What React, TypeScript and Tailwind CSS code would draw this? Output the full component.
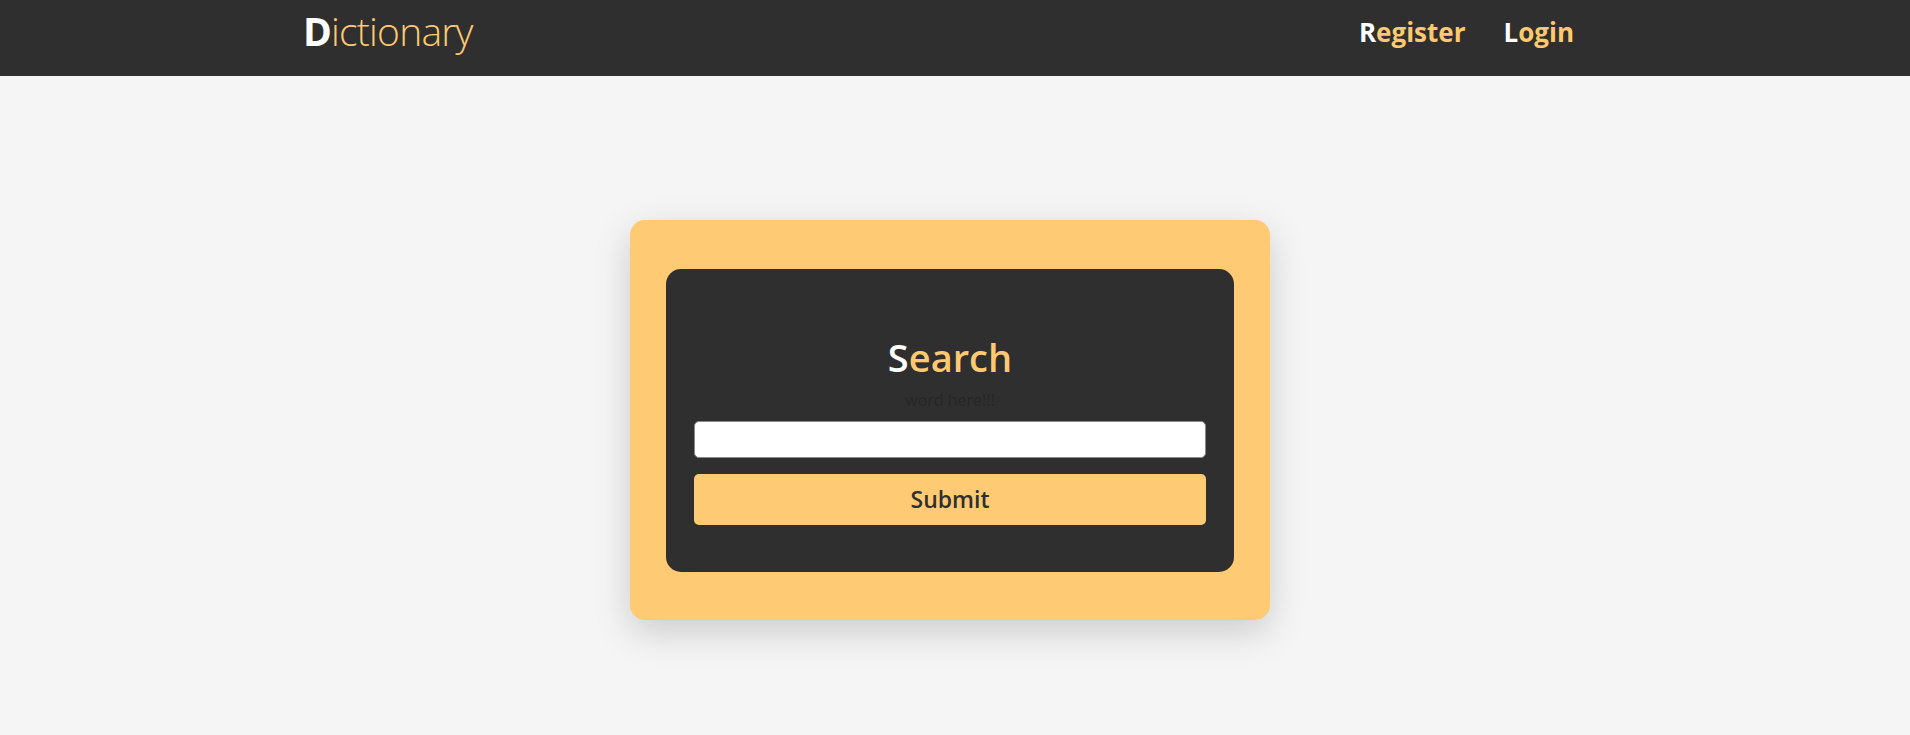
import React from "react"

const font = { fontFamily: '"Open Sans", "Noto Sans", sans-serif' }

function Navbar() {
  return (
    <header className="h-[76px] w-full bg-[#2f2f2f]">
      <div className="mx-auto flex h-full w-[1304px] items-start justify-between">
        <a href="#" className="mt-[4px] text-[39px] leading-[54px] tracking-[-0.8px]">
          <span className="font-bold text-white">D</span>
          <span className="font-light text-[#ffc970]">ictionary</span>
        </a>
        <nav className="mt-[14px] flex gap-[38px] pr-[33px] text-[26px] font-bold leading-[36px]">
          <a href="#">
            <span className="text-white">R</span>
            <span className="text-[#ffc970]">egister</span>
          </a>
          <a href="#">
            <span className="text-white">L</span>
            <span className="text-[#ffc970]">ogin</span>
          </a>
        </nav>
      </div>
    </header>
  )
}

function SearchCard() {
  return (
    <div className="flex h-[400px] w-[640px] items-center justify-center rounded-[15px] bg-[#ffca74] shadow-[0_12px_36px_rgba(0,0,0,0.17)]">
      <form
        className="flex w-[568px] flex-col items-center rounded-[15px] bg-[#2f2f2f] px-[28px] pt-[62px] pb-[47px]"
        onSubmit={(e) => e.preventDefault()}
      >
        <h1 className="text-[38px] font-semibold leading-[53px]">
          <span className="text-white">S</span>
          <span className="text-[#ffc970]">earch</span>
        </h1>
        <label htmlFor="word" className="mt-[5px] text-[16px] leading-[22px] text-[#262626]">
          word here!!!
        </label>
        <input
          id="word"
          type="text"
          className="mt-[10px] h-[37px] w-full rounded-[5px] border border-[#8a8a8a] bg-white px-2 outline-none"
        />
        <button
          type="submit"
          className="mt-[16px] h-[51px] w-full rounded-[5px] bg-[#ffca74] text-[23px] font-semibold text-[#2f2f2f]"
        >
          Submit
        </button>
      </form>
    </div>
  )
}

export default function App() {
  return (
    <div className="min-h-[735px] bg-[#f5f5f5]" style={font}>
      <Navbar />
      <main className="flex justify-center pt-[144px] pr-[10px]">
        <SearchCard />
      </main>
    </div>
  )
}
